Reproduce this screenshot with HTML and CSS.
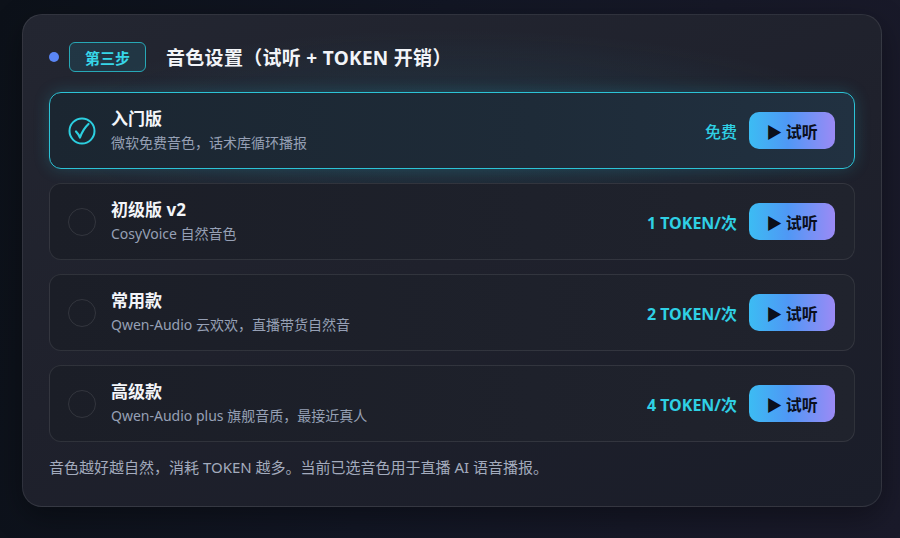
FILE: index.html
```html
<!DOCTYPE html>
<html lang="zh-CN">
<head>
  <meta charset="UTF-8" />
  <meta name="viewport" content="width=device-width, initial-scale=1.0"/>
  <title>音色设置</title>

  <link rel="stylesheet" href="styles.css">
</head>
<body>

  <section class="panel">
    <div class="panel-head">
      <span class="dot"></span>
      <span class="step">第三步</span>
      <h2>音色设置（试听 + TOKEN 开销）</h2>
    </div>

    <div class="options">
      <div class="option selected">
        <span class="radio">
          <svg viewBox="0 0 28 28" width="28" height="28">
            <circle cx="14" cy="14" r="12.5" fill="none" stroke="#2ccfe0" stroke-width="2"/>
            <path d="M8 14.5 Q10.5 17 12 20.5 Q15 12 20.5 7" fill="none" stroke="#2ccfe0" stroke-width="2.2" stroke-linecap="round" stroke-linejoin="round"/>
          </svg>
        </span>
        <div class="info">
          <div class="name">入门版</div>
          <div class="desc">微软免费音色，话术库循环播报</div>
        </div>
        <span class="price free">免费</span>
        <button type="button" class="play">&#9654; 试听</button>
      </div>

      <div class="option">
        <span class="radio"></span>
        <div class="info">
          <div class="name">初级版 v2</div>
          <div class="desc">CosyVoice 自然音色</div>
        </div>
        <span class="price">1 TOKEN/次</span>
        <button type="button" class="play">&#9654; 试听</button>
      </div>

      <div class="option">
        <span class="radio"></span>
        <div class="info">
          <div class="name">常用款</div>
          <div class="desc">Qwen-Audio 云欢欢，直播带货自然音</div>
        </div>
        <span class="price">2 TOKEN/次</span>
        <button type="button" class="play">&#9654; 试听</button>
      </div>

      <div class="option">
        <span class="radio"></span>
        <div class="info">
          <div class="name">高级款</div>
          <div class="desc">Qwen-Audio plus 旗舰音质，最接近真人</div>
        </div>
        <span class="price">4 TOKEN/次</span>
        <button type="button" class="play">&#9654; 试听</button>
      </div>
    </div>

    <p class="note">音色越好越自然，消耗 TOKEN 越多。当前已选音色用于直播 AI 语音播报。</p>
  </section>

</body>
</html>
```

FILE: styles.css
```css
* {
  box-sizing: border-box;
}

html, body {
  height: 100%;
}

body {
  margin: 0;
  padding: 14px 18px 0 22px;
  font-family: "Noto Sans", "Noto Sans CJK SC", sans-serif;
  background: linear-gradient(100deg, #0c1119 0%, #121624 45%, #1a1a2a 100%);
  color: #e8ecf4;
}

.panel {
  height: 493px;
  padding: 27px 26px 0 26px;
  border-radius: 20px;
  border: 1px solid rgba(255,255,255,0.09);
  background:
    radial-gradient(ellipse 70% 30% at 50% 24%, rgba(40,150,180,0.16), transparent 70%),
    linear-gradient(160deg, #232631 0%, #1f212c 50%, #1a1d29 100%);
  box-shadow: 0 10px 30px rgba(0,0,0,0.35);
}

.panel-head {
  display: flex;
  align-items: center;
  height: 30px;
}

.dot {
  width: 10px;
  height: 10px;
  border-radius: 50%;
  background: #5a86f5;
  margin-right: 10px;
}

.step {
  display: inline-flex;
  align-items: center;
  justify-content: center;
  width: 77px;
  height: 30px;
  border: 1px solid #27a8b6;
  border-radius: 6px;
  background: rgba(30,120,140,0.22);
  color: #37d6e8;
  font-size: 15px;
  font-weight: 700;
  margin-right: 20px;
}

h2 {
  margin: 0;
  font-size: 19px;
  font-weight: 700;
  color: #f2f4f8;
  letter-spacing: 0.3px;
}

.options {
  display: flex;
  flex-direction: column;
  gap: 14px;
  margin-top: 20px;
}

.option {
  display: flex;
  align-items: center;
  height: 77px;
  padding: 0 19px 0 18px;
  border-radius: 12px;
  border: 1px solid rgba(255,255,255,0.09);
  background: linear-gradient(90deg, #1b1e27 0%, #1e212b 60%, #20232d 100%);
}

.option.selected {
  border: 1.5px solid #2cc3d6;
  background: linear-gradient(90deg, #1b2631 0%, #1e2b38 60%, #213141 100%);
  box-shadow: 0 0 16px rgba(40,190,215,0.22);
}

.radio {
  width: 28px;
  height: 28px;
  border-radius: 50%;
  border: 1.5px solid rgba(255,255,255,0.1);
  flex-shrink: 0;
  margin-right: 15px;
}

.selected .radio {
  border: none;
}

.radio svg {
  display: block;
}

.info {
  flex: 1;
  display: flex;
  flex-direction: column;
  gap: 3px;
}

.name {
  font-size: 17px;
  font-weight: 700;
  line-height: 22px;
  color: #f3f5f9;
}

.desc {
  font-size: 14px;
  line-height: 20px;
  color: #96a0b5;
}

.price {
  font-size: 16px;
  font-weight: 700;
  color: #2fd0e4;
  margin-right: 12px;
}

.price.free {
  font-weight: 500;
}

.play {
  width: 86px;
  height: 37px;
  border: none;
  border-radius: 10px;
  background: linear-gradient(90deg, #3cbcf3 0%, #4f98f5 45%, #9b8af5 100%);
  color: #0b0f1c;
  font-family: "Noto Sans CJK SC", sans-serif;
  font-size: 16px;
  font-weight: 700;
  cursor: pointer;
}

.note {
  margin: 14px 0 0 0;
  font-size: 15px;
  color: #a3abbd;
}
```
